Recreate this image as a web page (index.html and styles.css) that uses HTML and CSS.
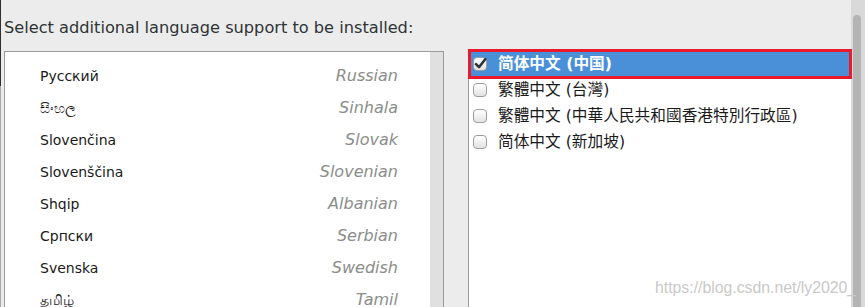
FILE: index.html
```html
<!DOCTYPE html>
<html>
<head>
<meta charset="utf-8">
<link rel="stylesheet" href="styles.css">
</head>
<body>
<div class="screen">
  <div class="edge"></div>
  <div class="content">
    <div class="heading">Select additional language support to be installed:</div>
    <div class="panes">
      <div class="langbox">
        <div class="langlist">
          <div class="lrow"><span class="native">Русский</span><span class="english">Russian</span></div>
          <div class="lrow"><span class="native">සිංහල</span><span class="english">Sinhala</span></div>
          <div class="lrow"><span class="native">Slovenčina</span><span class="english">Slovak</span></div>
          <div class="lrow"><span class="native">Slovenščina</span><span class="english">Slovenian</span></div>
          <div class="lrow"><span class="native">Shqip</span><span class="english">Albanian</span></div>
          <div class="lrow"><span class="native">Српски</span><span class="english">Serbian</span></div>
          <div class="lrow"><span class="native">Svenska</span><span class="english">Swedish</span></div>
          <div class="lrow"><span class="native">தமிழ்</span><span class="english">Tamil</span></div>
        </div>
        <div class="trough"></div>
      </div>
      <div class="localebox">
        <div class="crow selected">
          <span class="check checked"><svg width="14" height="14" viewBox="0 0 14 14"><path d="M3 7.2 L6 10.2 L12.2 2.2" fill="none" stroke="#2e3436" stroke-width="2.6" stroke-linecap="round" stroke-linejoin="round"/></svg></span>
          <span class="ctext">简体中文 (中国)</span>
        </div>
        <div class="crow"><span class="check"></span><span class="ctext">繁體中文 (台灣)</span></div>
        <div class="crow"><span class="check"></span><span class="ctext">繁體中文 (中華人民共和國香港特別行政區)</span></div>
        <div class="crow"><span class="check"></span><span class="ctext">简体中文 (新加坡)</span></div>
      </div>
    </div>
  </div>
  <div class="vscroll"><div class="slider"></div></div>
  <div class="annot"></div>
  <div class="watermark">https://blog.csdn.net/ly2020_</div>
</div>
</body>
</html>
```
FILE: styles.css
```css
html, body {
  margin: 0;
  padding: 0;
}
body {
  background: #ececec;
  width: 865px;
  height: 307px;
  overflow: hidden;
  font-family: "DejaVu Sans", "Noto Sans CJK SC", sans-serif;
  color: #2e3436;
}
.screen {
  position: relative;
  display: flex;
  width: 865px;
  height: 307px;
  overflow: hidden;
}
.edge {
  width: 1px;
  flex: none;
  background: linear-gradient(to bottom, #2f2f2f 0, #2f2f2f 86px, #a9a9a9 86px);
}
.content {
  flex: none;
  width: 850px;
  padding-left: 3px;
  box-sizing: border-box;
}
.heading {
  margin-top: 18px;
  font-size: 16.2px;
  line-height: 19px;
  height: 19px;
  white-space: nowrap;
}
.panes {
  display: flex;
  margin-top: 13px;
  align-items: flex-start;
}
.langbox {
  margin-top: 1px;
  width: 440px;
  height: 300px;
  box-sizing: border-box;
  border: 1px solid #9b9b9b;
  display: flex;
  flex: none;
}
.langlist {
  flex: 1;
  background: #fff;
  padding-top: 8px;
}
.trough {
  width: 13px;
  background: #e0e0e0;
}
.lrow {
  display: flex;
  justify-content: space-between;
  align-items: baseline;
  height: 32px;
  line-height: 32px;
  padding-left: 35px;
  padding-right: 32px;
}
.native {
  font-size: 14px;
  color: #1a1a1a;
  font-family: "DejaVu Sans", "Noto Sans", sans-serif;
}
.english {
  font-size: 16px;
  font-style: italic;
  color: #8b8d8a;
}
.localebox {
  margin-left: 24px;
  flex: 1;
  height: 300px;
  background: #fff;
  border-left: 1px solid #9b9b9b;
  border-top: 1px solid #9b9b9b;
}
.crow {
  display: flex;
  align-items: center;
  height: 26px;
  padding-left: 4px;
  font-size: 15.7px;
  color: #1a1a1a;
  white-space: nowrap;
}
.crow.selected {
  background: #4a90d9;
  color: #fff;
  font-weight: bold;
}
.check {
  width: 14px;
  height: 14px;
  box-sizing: border-box;
  border: 1px solid #9e9e9e;
  border-radius: 4px;
  background: linear-gradient(to bottom, #ffffff, #e2e2e2);
  margin-right: 11px;
  flex: none;
  position: relative;
}
.check svg {
  position: absolute;
  left: -1px;
  top: -1px;
}
.ctext {
  line-height: 26px;
}
.vscroll {
  flex: none;
  width: 14px;
  position: relative;
  background: #d9d9d9;
}
.slider {
  margin-left: 2px;
  margin-top: 15px;
  width: 8px;
  height: 300px;
  background: #b4b4b4;
  border-radius: 4px 4px 0 0;
}
.annot {
  position: absolute;
  left: 468px;
  top: 49px;
  width: 384px;
  height: 30px;
  box-sizing: border-box;
  border: 3px solid #ea1a2a;
}
.watermark {
  position: absolute;
  left: 655px;
  top: 279px;
  font-family: "Liberation Sans", Arial, sans-serif;
  font-size: 15.8px;
  line-height: 18px;
  color: #c9c9c9;
  white-space: nowrap;
}
```
